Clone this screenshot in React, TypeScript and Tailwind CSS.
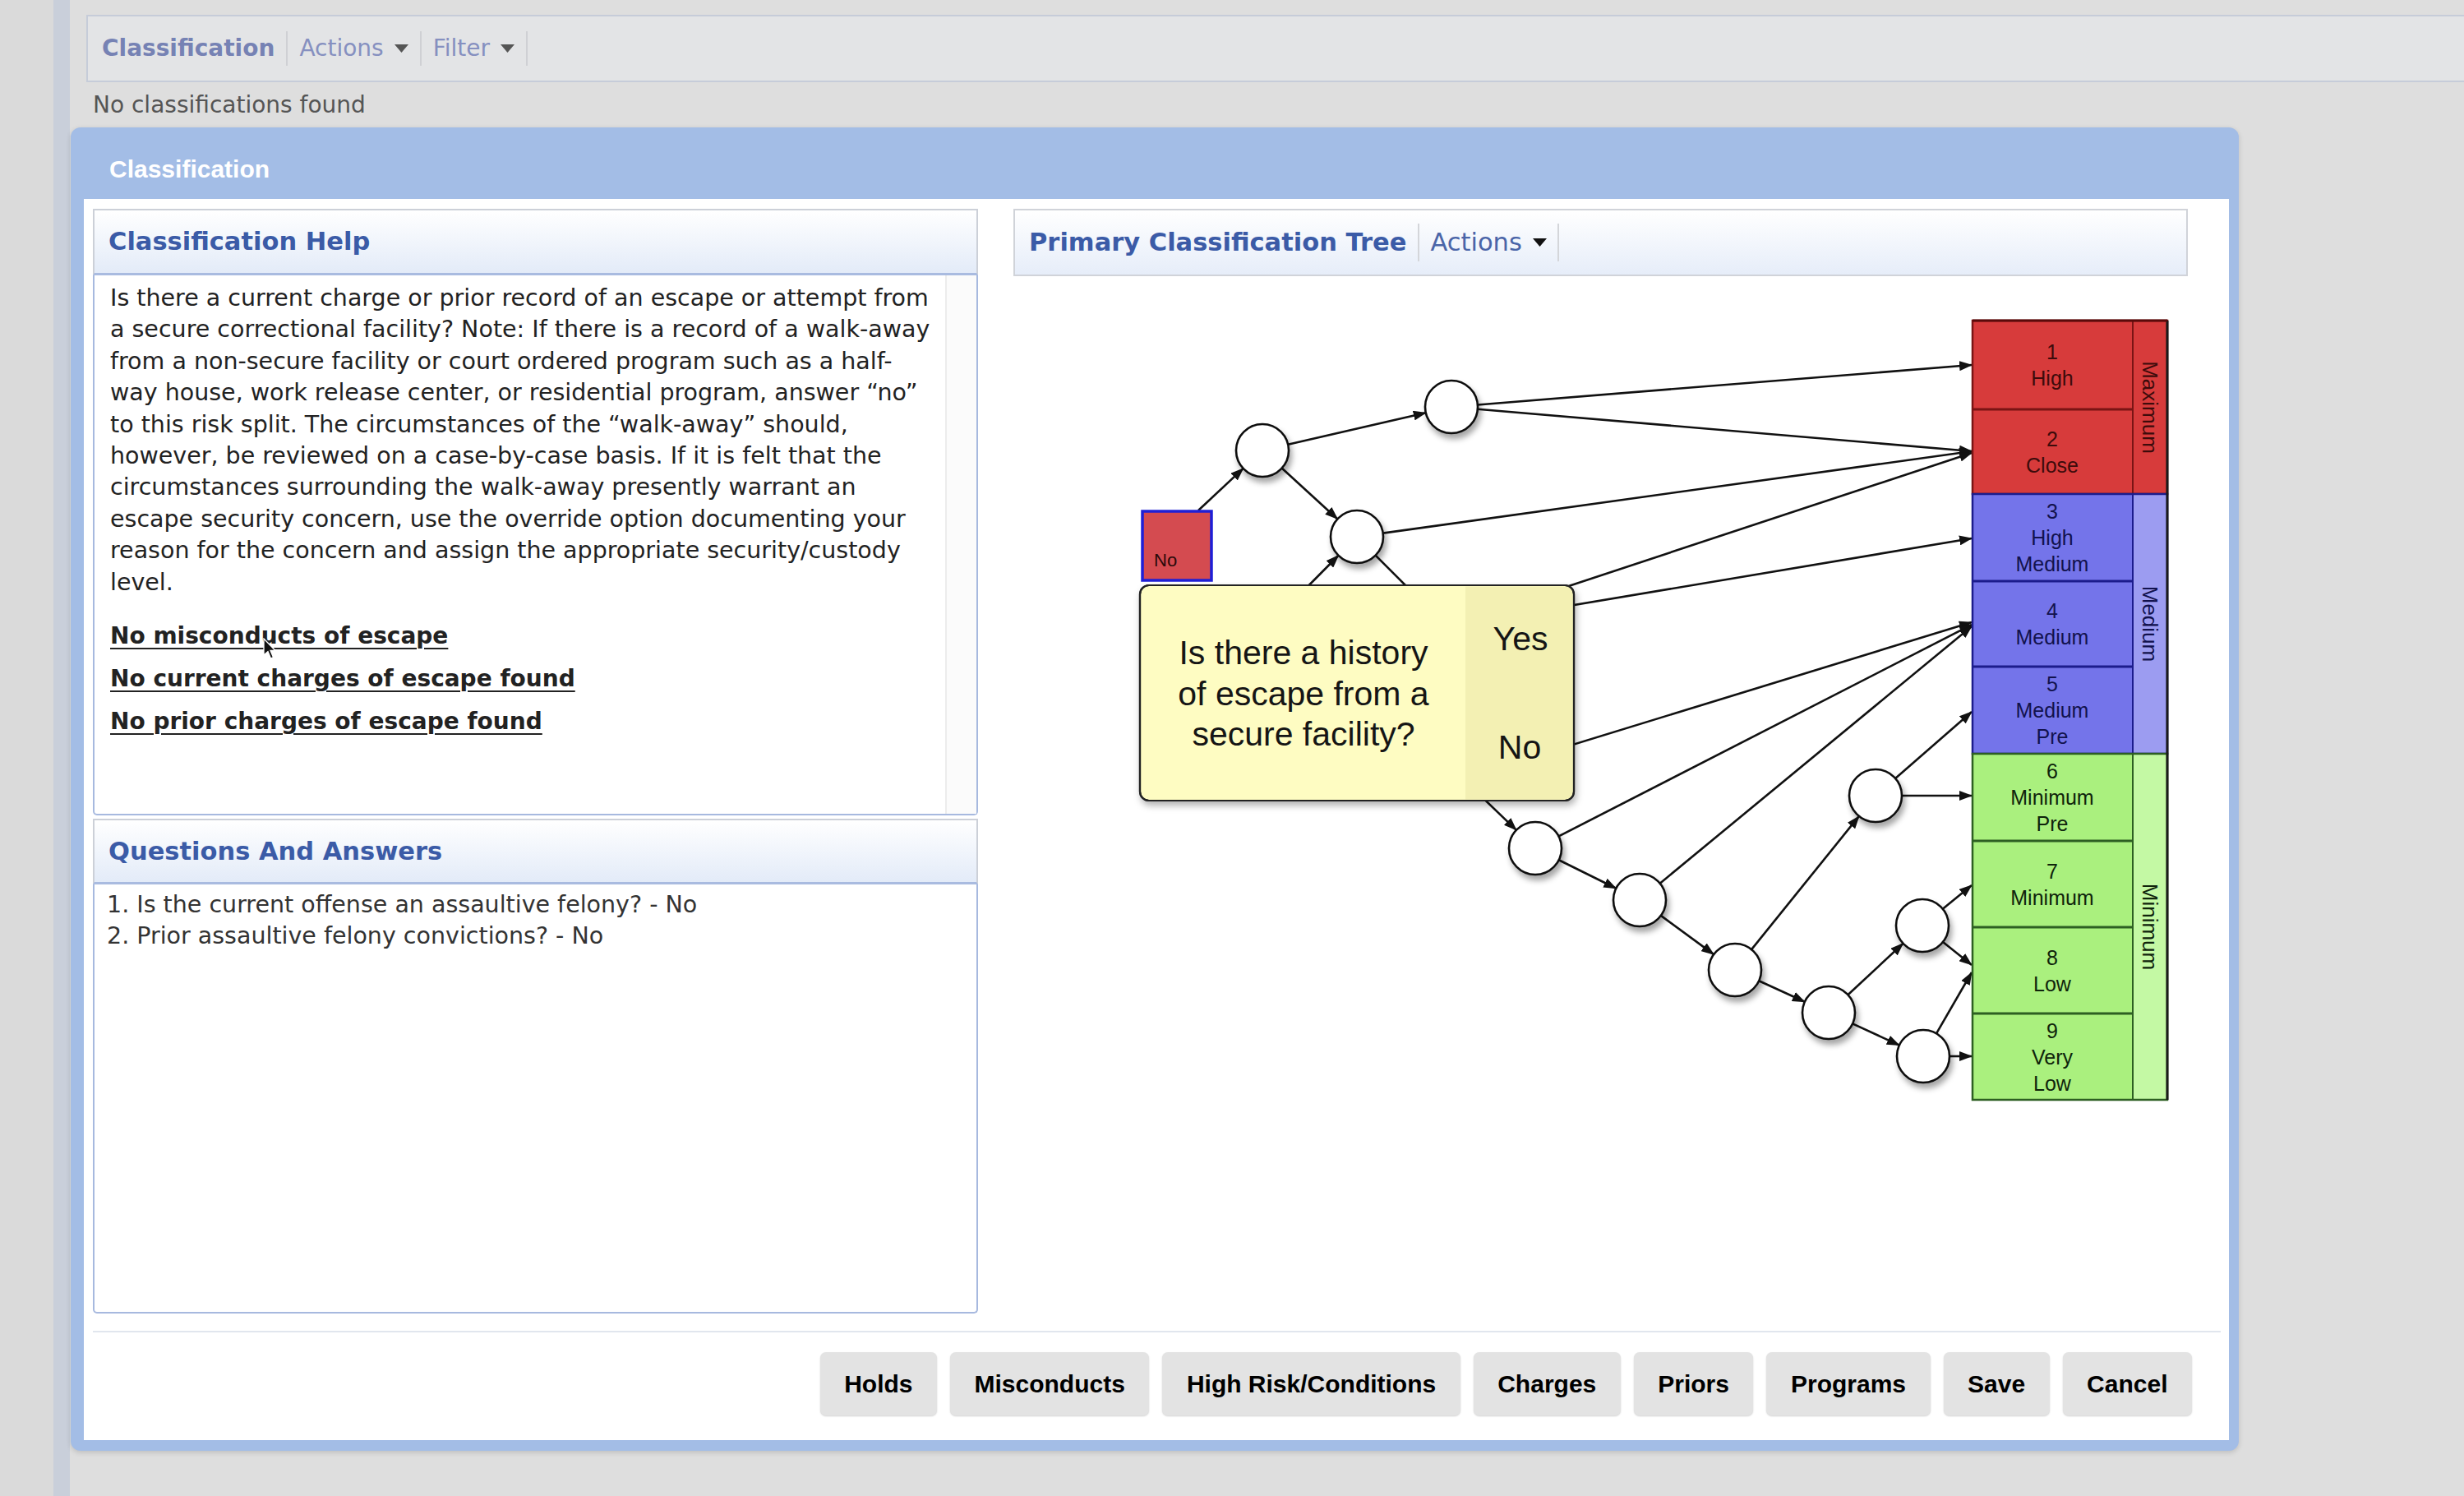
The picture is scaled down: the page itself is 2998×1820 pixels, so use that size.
import React from 'react'

type Pt = [number, number]

const helpLines = [
  'Is there a current charge or prior record of an escape or attempt from',
  'a secure correctional facility? Note: If there is a record of a walk-away',
  'from a non-secure facility or court ordered program such as a half-',
  'way house, work release center, or residential program, answer \u201cno\u201d',
  'to this risk split. The circumstances of the \u201cwalk-away\u201d should,',
  'however, be reviewed on a case-by-case basis. If it is felt that the',
  'circumstances surrounding the walk-away presently warrant an',
  'escape security concern, use the override option documenting your',
  'reason for the concern and assign the appropriate security/custody',
  'level.',
]

const helpLinks = [
  'No misconducts of escape',
  'No current charges of escape found',
  'No prior charges of escape found',
]

const buttons = ['Holds', 'Misconducts', 'High Risk/Conditions', 'Charges', 'Priors', 'Programs', 'Save', 'Cancel']

// tree nodes, page coordinates
const R = 32
const nodes: Record<string, Pt> = {
  A: [1536, 548],
  B: [1766, 495],
  C: [1651, 653],
  D1: [1868, 1032],
  D2: [1995, 1095],
  D3: [2111, 1180],
  D4: [2225, 1232],
  E1: [2282, 968],
  E2: [2339, 1126],
  E3: [2340, 1285],
}

// points hidden under the tooltip
const hidden: Record<string, Pt> = {
  P: [1560, 745],
  Q: [1760, 762],
  S: [1770, 950],
  T: [1790, 957],
  NO: [1458, 621],
}

const TIP = 2399
const edges: [string, string | Pt][] = [
  ['NO', 'A'],
  ['A', 'B'],
  ['A', 'C'],
  ['P', 'C'],
  ['C', 'Q'],
  ['B', [TIP, 444]],
  ['B', [TIP, 549]],
  ['C', [TIP, 549]],
  ['Q', [TIP, 551]],
  ['Q', [TIP, 655]],
  ['S', [TIP, 757]],
  ['D1', [TIP, 760]],
  ['D2', [TIP, 762]],
  ['T', 'D1'],
  ['D1', 'D2'],
  ['D2', 'D3'],
  ['D3', 'D4'],
  ['D3', 'E1'],
  ['E1', [TIP, 866]],
  ['E1', [TIP, 968]],
  ['D4', 'E2'],
  ['D4', 'E3'],
  ['E2', [TIP, 1077]],
  ['E2', [TIP, 1174]],
  ['E3', [TIP, 1183]],
  ['E3', [TIP, 1285]],
]

function resolve(key: string | Pt): { p: Pt; r: number } {
  if (Array.isArray(key)) return { p: key, r: 0 }
  if (nodes[key]) return { p: nodes[key], r: R }
  return { p: hidden[key], r: 0 }
}

const bounds = [390, 498, 601, 707, 811, 917, 1023, 1128, 1233, 1338]
const levels = [
  ['1', 'High'],
  ['2', 'Close'],
  ['3', 'High', 'Medium'],
  ['4', 'Medium'],
  ['5', 'Medium', 'Pre'],
  ['6', 'Minimum', 'Pre'],
  ['7', 'Minimum'],
  ['8', 'Low'],
  ['9', 'Very', 'Low'],
]
const groups = [
  { from: 0, to: 2, main: '#d73b3b', cat: '#d73b3b', line: '#7a1414', text: '#3d0b0b', label: 'Maximum' },
  { from: 2, to: 5, main: '#7474ea', cat: '#9c9cf1', line: '#1c1c8c', text: '#12124d', label: 'Medium' },
  { from: 5, to: 9, main: '#aaf07e', cat: '#c4f9a4', line: '#2d5f22', text: '#0f240b', label: 'Minimum' },
]

function Caret({ color }: { color: string }) {
  return (
    <svg width="17" height="10" viewBox="0 0 17 10" className="ml-[13px]">
      <path d="M0 0 L17 0 L8.5 10 Z" fill={color} />
    </svg>
  )
}

function PanelHeader({ title, h }: { title: string; h: string }) {
  return (
    <div
      className={`flex ${h} shrink-0 items-center border-2 border-b-[3px] border-[#ccd0d8] border-b-[#a9bbe0] bg-gradient-to-b from-white to-[#e3ebf8] pl-[17px] text-[30.5px] font-bold text-[#3b5ba7]`}
    >
      {title}
    </div>
  )
}

function Tree() {
  return (
    <svg width="1429" height="1262" viewBox="1233 336 1429 1262" className="block">
      <defs>
        <marker
          id="arr"
          viewBox="0 0 16 12"
          refX="15"
          refY="6"
          markerWidth="16"
          markerHeight="12"
          markerUnits="userSpaceOnUse"
          orient="auto"
        >
          <path d="M0,0 L16,6 L0,12 Z" fill="#111" />
        </marker>
        <filter id="sh" x="-40%" y="-40%" width="190%" height="190%">
          <feDropShadow dx="3" dy="6" stdDeviation="3.5" floodColor="#000" floodOpacity="0.35" />
        </filter>
        <filter id="tipsh" x="-10%" y="-10%" width="120%" height="130%">
          <feDropShadow dx="2" dy="5" stdDeviation="4" floodColor="#000" floodOpacity="0.3" />
        </filter>
      </defs>

      {edges.map(([f, t], i) => {
        const a = resolve(f)
        const b = resolve(t)
        const dx = b.p[0] - a.p[0]
        const dy = b.p[1] - a.p[1]
        const len = Math.hypot(dx, dy)
        const ux = dx / len
        const uy = dy / len
        return (
          <line
            key={i}
            x1={a.p[0] + ux * a.r}
            y1={a.p[1] + uy * a.r}
            x2={b.p[0] - ux * b.r}
            y2={b.p[1] - uy * b.r}
            stroke="#111"
            strokeWidth="2.6"
            markerEnd="url(#arr)"
          />
        )
      })}

      {Object.entries(nodes).map(([k, p]) => (
        <circle key={k} cx={p[0]} cy={p[1]} r={R} fill="#fff" stroke="#111" strokeWidth="2.6" filter="url(#sh)" />
      ))}

      {/* level column */}
      <g fontFamily="'Liberation Sans', Arial, sans-serif">
        {groups.map((g) => {
          const top = bounds[g.from]
          const bottom = bounds[g.to]
          return (
            <g key={g.label}>
              <rect x="2400" y={top} width="195" height={bottom - top} fill={g.main} />
              <rect x="2595" y={top} width="42" height={bottom - top} fill={g.cat} />
              {levels.slice(g.from, g.to).map((lines, j) => {
                const idx = g.from + j
                const y0 = bounds[idx]
                const y1 = bounds[idx + 1]
                const cy = (y0 + y1) / 2
                return (
                  <g key={idx}>
                    {j > 0 && <line x1="2400" x2="2595" y1={y0} y2={y0} stroke={g.line} strokeWidth="3" />}
                    {lines.map((t, k) => (
                      <text
                        key={k}
                        x="2497"
                        y={cy + (k - (lines.length - 1) / 2) * 32 + 9}
                        textAnchor="middle"
                        fontSize="25"
                        fill={g.text}
                      >
                        {t}
                      </text>
                    ))}
                  </g>
                )
              })}
              <rect x="2400" y={top} width="237" height={bottom - top} fill="none" stroke={g.line} strokeWidth="2.5" />
              <line x1="2595" x2="2595" y1={top} y2={bottom} stroke={g.line} strokeWidth="2" />
              <text
                x="2616"
                y={(top + bottom) / 2}
                transform={`rotate(90 2616 ${(top + bottom) / 2})`}
                textAnchor="middle"
                dominantBaseline="central"
                fontSize="26"
                fill={g.text}
              >
                {g.label}
              </text>
            </g>
          )
        })}
        <line x1="2637" x2="2637" y1="390" y2="1338" stroke="#1a1a1a" strokeWidth="3" />
        <line x1="2400" x2="2637" y1="390" y2="390" stroke="#5a0a0a" strokeWidth="3" />

        {/* selected answer */}
        <rect x="1390" y="622" width="84" height="84" fill="#d44b50" stroke="#1f1fd6" strokeWidth="3.5" />
        <text x="1404" y="689" fontSize="22" fill="#2a0a0a">
          No
        </text>

        {/* tooltip */}
        <g filter="url(#tipsh)">
          <rect x="1387" y="712" width="528" height="262" rx="11" fill="#fefcc2" stroke="#222" strokeWidth="2.2" />
        </g>
        <path d="M1783 713.5 H1903 Q1913.5 713.5 1913.5 724 V962 Q1913.5 972.5 1903 972.5 H1783 Z" fill="#f3f0b3" />
        <rect x="1387" y="712" width="528" height="262" rx="11" fill="none" stroke="#222" strokeWidth="2.2" />
        <g fontSize="41" fill="#151515" textAnchor="middle">
          <text x="1586" y="808">Is there a history</text>
          <text x="1586" y="858">of escape from a</text>
          <text x="1586" y="907">secure facility?</text>
          <text x="1850" y="791">Yes</text>
          <text x="1849" y="923">No</text>
        </g>
      </g>
    </svg>
  )
}

export default function App() {
  return (
    <div className="flex h-[1820px] w-[2998px] overflow-hidden bg-[#dadada] font-['DejaVu_Sans',Verdana,sans-serif]">
      <div className="w-[65px] shrink-0 bg-[#dadada]" />
      <div className="w-[20px] shrink-0 bg-[#c9cfda]" />
      <main className="flex min-w-0 flex-1 flex-col bg-[#dedede] pt-[18px]">
        {/* page toolbar */}
        <div className="ml-[20px] flex h-[82px] shrink-0 items-center border-y-2 border-l-2 border-[#c6ccd9] bg-[#e3e4e6] pl-[17px] text-[28px]">
          <span className="border-r-2 border-[#cfd0d4] pr-[14px] font-bold text-[#7682b4]">Classification</span>
          <span className="flex items-center border-r-2 border-[#cfd0d4] px-[14px] text-[#8690c0]">
            Actions
            <Caret color="#555" />
          </span>
          <span className="flex items-center border-r-2 border-[#cfd0d4] px-[14px] text-[#8690c0]">
            Filter
            <Caret color="#555" />
          </span>
        </div>

        <p className="ml-[28px] mt-[10px] h-[36px] text-[28px] leading-[36px] text-[#555]">No classifications found</p>

        {/* dialog */}
        <section className="ml-[1px] mt-[9px] flex h-[1610px] w-[2638px] shrink-0 flex-col rounded-[12px] bg-[#a3bde6] pb-[13px] pl-[16px] pr-[12px] shadow-[0_2px_6px_rgba(0,0,0,0.15)]">
          <h2 className="flex h-[87px] shrink-0 items-center pl-[31px] pt-[13px] font-['Liberation_Sans',Arial,sans-serif] text-[30px] font-bold text-white">
            Classification
          </h2>
          <div className="flex flex-1 flex-col bg-white pl-[11px] pr-[10px] pt-[12px]">
            <div className="flex h-[1344px] gap-[43px]">
              {/* left column */}
              <div className="flex w-[1077px] flex-col">
                <PanelHeader title="Classification Help" h="h-[81px]" />
                <div className="relative flex h-[657px] shrink-0 rounded-b-[5px] border-2 border-t-0 border-[#a7b9df]">
                  <div className="flex-1 pl-[19px] pt-[9px] text-[#222]">
                    <div className="text-[28.5px] leading-[38.4px]">
                      {helpLines.map((l) => (
                        <div key={l} className="whitespace-nowrap">
                          {l}
                        </div>
                      ))}
                    </div>
                    <div className="mt-[20px] text-[28px] leading-[52px]">
                      {helpLinks.map((l) => (
                        <div key={l} className="whitespace-nowrap font-bold underline decoration-2 underline-offset-[5px]">
                          {l}
                        </div>
                      ))}
                    </div>
                  </div>
                  <div className="w-[38px] border-l-2 border-[#ececec] bg-[#fbfbfb]" />
                  <svg width="16" height="28" viewBox="0 0 16 28" className="absolute left-[205px] top-[441px]">
                    <path d="M1 1 L1 21 L6 16.5 L9.5 25 L12.5 23.7 L9 15.5 L15 15.5 Z" fill="#111" stroke="#fff" strokeWidth="1.3" />
                  </svg>
                </div>
                <div className="h-[4px] shrink-0" />
                <PanelHeader title="Questions And Answers" h="h-[80px]" />
                <div className="flex-1 rounded-b-[5px] border-2 border-t-0 border-[#a7b9df] pl-[15px] pt-[6px] text-[28.5px] leading-[38px] text-[#333]">
                  <div>1. Is the current offense an assaultive felony? - No</div>
                  <div>2. Prior assaultive felony convictions? - No</div>
                </div>
              </div>

              {/* right column */}
              <div className="flex w-[1429px] flex-col">
                <div className="flex h-[82px] shrink-0 items-center border-2 border-[#d0d3d9] bg-gradient-to-b from-white to-[#e6edf9] pl-[17px] text-[30.5px]">
                  <span className="border-r-2 border-[#d4d6da] pr-[14px] font-bold text-[#3b5ba7]">Primary Classification Tree</span>
                  <span className="flex items-center border-r-2 border-[#d4d6da] px-[13px] text-[#4a65a8]">
                    Actions
                    <Caret color="#111" />
                  </span>
                </div>
                <Tree />
              </div>
            </div>

            <div className="mt-[21px] h-[2px] bg-[#e1e6ee]" />

            <div className="mt-[24px] flex justify-end gap-[16px] pr-[35px] font-['Liberation_Sans',Arial,sans-serif]">
              {buttons.map((b) => (
                <button
                  key={b}
                  className="h-[77px] rounded-[7px] bg-[#e3e3e3] px-[29.5px] text-[30px] font-bold text-black shadow-[0_1px_2px_rgba(0,0,0,0.18)]"
                >
                  {b}
                </button>
              ))}
            </div>
          </div>
        </section>
      </main>
    </div>
  )
}
